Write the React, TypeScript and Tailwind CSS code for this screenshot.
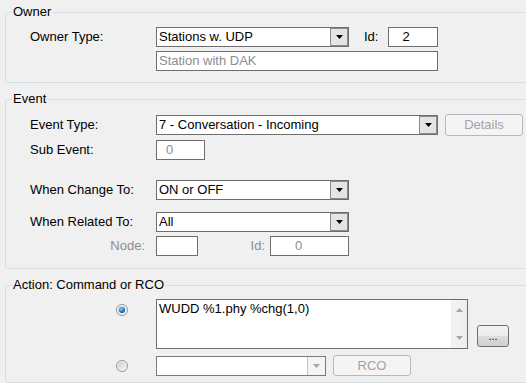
import React from 'react';

const Arrow = ({ up = false, color = '#000' }: { up?: boolean; color?: string }) => (
  <svg width="7" height="4" viewBox="0 0 7 4">
    {up ? <path d="M3.5 0 L7 4 L0 4 Z" fill={color} /> : <path d="M0 0 L7 0 L3.5 4 Z" fill={color} />}
  </svg>
);

const Select = ({ value, width, disabled = false }: { value: string; width: string; disabled?: boolean }) => (
  <div className={`flex h-[20px] ${width} border ${disabled ? 'border-[#7a7a7a]' : 'border-[#6e6e6e]'} bg-white`}>
    <div className="flex-1 truncate pl-[2px] leading-[18px]">{value}</div>
    {disabled ? (
      <div className="flex w-[18px] items-center justify-center border-l border-[#c4c4c4] bg-[#f4f4f4]">
        <Arrow color="#a8a8a8" />
      </div>
    ) : (
      <div className="flex w-[18px] items-center justify-center border border-[#8a8a8a] bg-[#e4e4e4]">
        <Arrow />
      </div>
    )}
  </div>
);

const Input = ({ value, className = '' }: { value: string; className?: string }) => (
  <div className={`h-[20px] border border-[#6e6e6e] bg-white leading-[18px] ${className}`}>{value}</div>
);

const DisabledButton = ({ label, className = '' }: { label: string; className?: string }) => (
  <div
    className={`flex items-center justify-center rounded-[3px] border border-[#b5b9bc] bg-[#f4f4f4] text-[#a3a3a3] ${className}`}
  >
    {label}
  </div>
);

const Radio = ({ checked }: { checked: boolean }) => (
  <svg width="12" height="12" viewBox="0 0 12 12">
    <defs>
      <radialGradient id="rb" cx="40%" cy="35%" r="70%">
        <stop offset="0%" stopColor="#8fd3ff" />
        <stop offset="60%" stopColor="#1f7fd0" />
        <stop offset="100%" stopColor="#0b3f7a" />
      </radialGradient>
      <linearGradient id="rg" x1="0" y1="0" x2="1" y2="1">
        <stop offset="0%" stopColor="#cfcfcf" />
        <stop offset="100%" stopColor="#f6f6f6" />
      </linearGradient>
    </defs>
    <circle cx="6" cy="6" r="5.5" fill="#f4f4f4" stroke="#939393" />
    <circle cx="6" cy="6" r="4" fill="url(#rg)" />
    {checked && <circle cx="6" cy="6" r="3" fill="url(#rb)" />}
  </svg>
);

const Group = ({ title, children, className = '' }: { title: string; children: React.ReactNode; className?: string }) => (
  <fieldset className={`ml-[5px] w-[540px] rounded-[3px] border border-[#d5dfe5] ${className}`}>
    <legend className="ml-[6px] px-[1px] leading-[16px]">{title}</legend>
    <div className="pl-[24px]">{children}</div>
  </fieldset>
);

export default function App() {
  return (
    <div className="h-[383px] w-[526px] overflow-hidden bg-[#f0f0f0] pt-[4px] font-['Liberation_Sans',Arial,sans-serif] text-[13px] text-black">
      <Group title="Owner" className="pb-[11px]">
        <div className="mt-[7px] flex items-center">
          <div className="w-[126px]">Owner Type:</div>
          <Select value="Stations w. UDP" width="w-[193px]" />
          <div className="ml-[15px] w-[24px]">Id:</div>
          <Input value="2" className="w-[50px] pr-[14px] text-center" />
        </div>
        <div className="mt-[4px] flex">
          <div className="w-[126px]" />
          <Input value="Station with DAK" className="w-[282px] pl-[2px] text-[#8d8d8d]" />
        </div>
      </Group>

      <Group title="Event" className="mt-[8px] pb-[12px]">
        <div className="mt-[7px] flex items-center">
          <div className="w-[126px]">Event Type:</div>
          <Select value="7 - Conversation - Incoming" width="w-[282px]" />
          <DisabledButton label="Details" className="ml-[7px] h-[22px] w-[78px]" />
        </div>
        <div className="mt-[4px] flex items-center">
          <div className="w-[126px]">Sub Event:</div>
          <Input value="0" className="w-[49px] pl-[9px] text-[#8d8d8d]" />
        </div>
        <div className="mt-[20px] flex items-center">
          <div className="w-[126px]">When Change To:</div>
          <Select value="ON or OFF" width="w-[193px]" />
        </div>
        <div className="mt-[12px] flex items-center">
          <div className="w-[126px]">When Related To:</div>
          <Select value="All" width="w-[193px]" />
        </div>
        <div className="mt-[4px] flex items-center">
          <div className="w-[126px] pr-[11px] text-right text-[#8d8d8d]">Node:</div>
          <Input value="" className="w-[42px]" />
          <div className="w-[72px] pr-[5px] text-right text-[#8d8d8d]">Id:</div>
          <Input value="0" className="w-[79px] pr-[22px] text-center text-[#8d8d8d]" />
        </div>
      </Group>

      <Group title="Action: Command or RCO" className="mt-[8px] pb-[6px]">
        <div className="mt-[6px] flex items-end">
          <div className="w-[86px]" />
          <div className="mb-[33px]">
            <Radio checked />
          </div>
          <div className="ml-[28px] flex h-[50px] w-[312px] border border-[#6e6e6e] bg-white">
            <div className="flex-1 pl-[2px] pt-[1px] leading-[16px]">WUDD %1.phy %chg(1,0)</div>
            <div className="flex w-[16px] flex-col items-center justify-between border-l border-[#ececec] bg-[linear-gradient(90deg,#f4f4f4,#ececec)] py-[8px]">
              <Arrow up color="#a5a5a5" />
              <Arrow color="#a5a5a5" />
            </div>
          </div>
          <div className="mb-[2px] ml-[9px] flex h-[22px] w-[32px] items-center justify-center rounded-[3px] border border-[#707070] bg-[linear-gradient(#f2f2f2_0%,#ebebeb_50%,#dddddd_50%,#cfcfcf_100%)] text-[11px] leading-none">
            ...
          </div>
        </div>
        <div className="mt-[6px] flex items-center">
          <div className="w-[86px]" />
          <Radio checked={false} />
          <div className="ml-[28px]">
            <Select value="" width="w-[170px]" disabled />
          </div>
          <DisabledButton label="RCO" className="ml-[7px] h-[21px] w-[78px]" />
        </div>
      </Group>
    </div>
  );
}
